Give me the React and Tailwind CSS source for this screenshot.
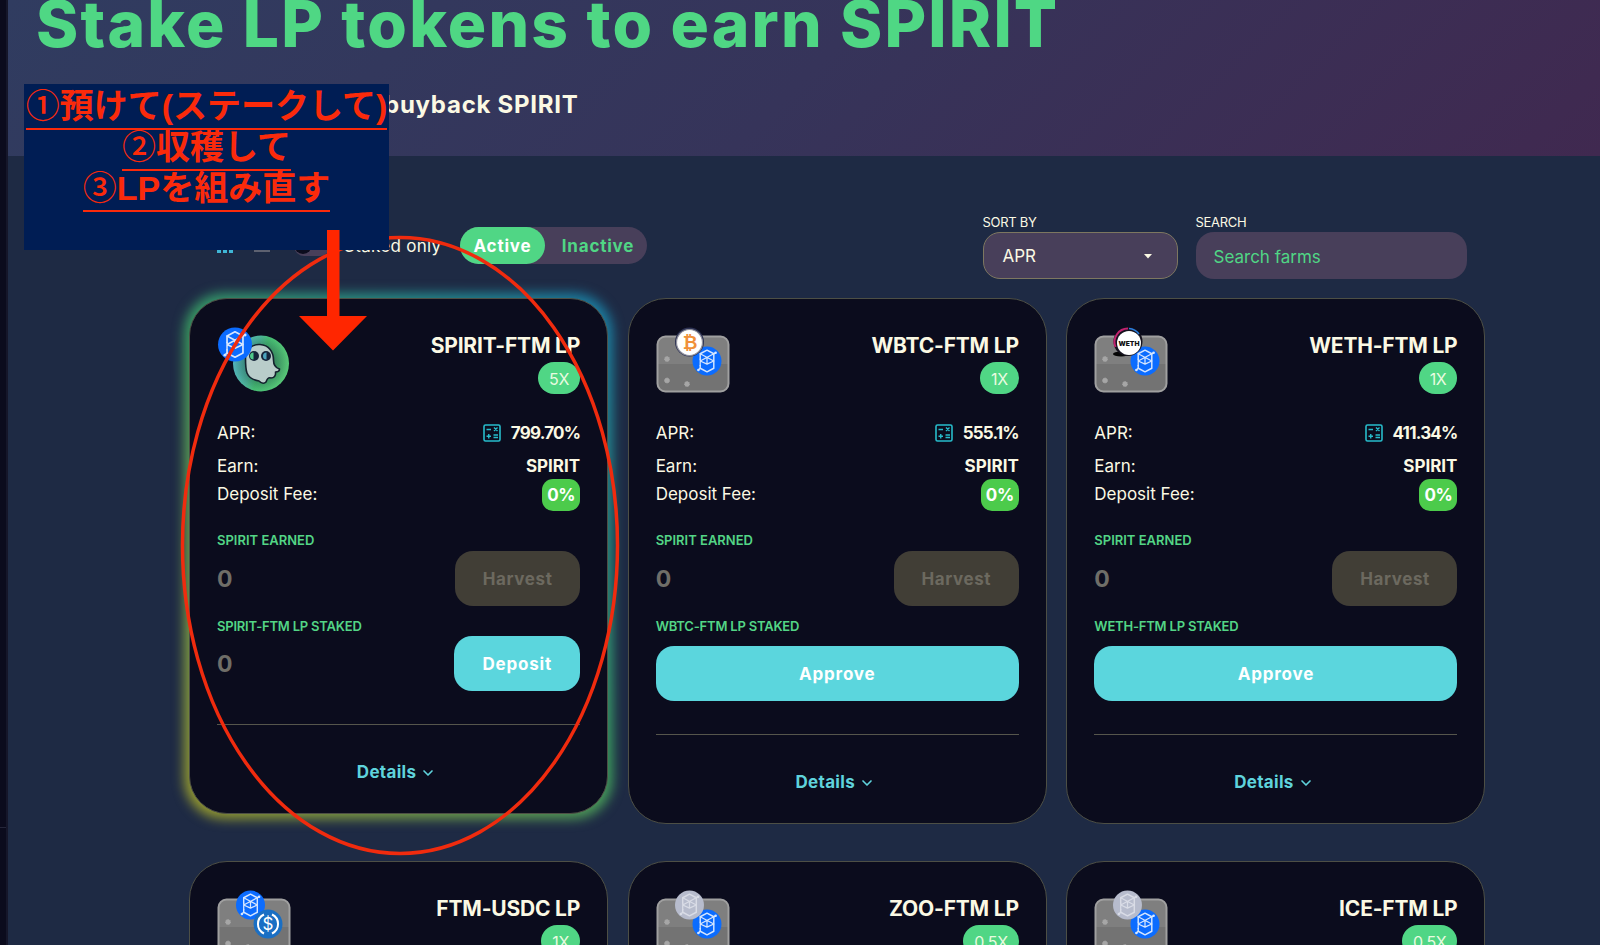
import React, { useState } from 'react';
import { ChevronDown } from 'lucide-react';

const farms = [
  { name: 'SPIRIT-FTM LP', multiplier: '5X', apr: '799.70%', logo: 'spirit', approved: true, featured: true },
  { name: 'WBTC-FTM LP', multiplier: '1X', apr: '555.1%', logo: 'wbtc' },
  { name: 'WETH-FTM LP', multiplier: '1X', apr: '411.34%', logo: 'weth' },
  { name: 'FTM-USDC LP', multiplier: '1X', logo: 'usdc', collapsed: true },
  { name: 'ZOO-FTM LP', multiplier: '0.5X', logo: 'zoo', collapsed: true },
  { name: 'ICE-FTM LP', multiplier: '0.5X', logo: 'ice', collapsed: true },
];

function Coin({ x, y, r, fill = '#0b6cff', stroke = '#d5e6ff' }) {
  return (
    <g transform={`translate(${x} ${y}) scale(${r / 16})`}>
      <circle r="16" fill={fill} />
      <g fill="none" stroke={stroke} strokeWidth="1.6" strokeLinejoin="round" strokeLinecap="round">
        <path d="M-7.5 -2 V-8 L0 -12 L7.5 -8 V8 L0 12 L-7.5 8 V5" />
        <path d="M-7.5 -8 L7.5 0 M7.5 -8 L-7.5 0 M-7.5 0 L0 3.500 L7.5 0 M0 -4 V3 M-7.5 -2 V5" strokeWidth="1.400" />
        <path d="M7.5 -8 L9.5 -9 M-7.5 8 L-9.5 10" />
      </g>
      <circle cx="9.500" cy="-9" r="1.400" fill={stroke} />
      <circle cx="-9.500" cy="10" r="1.400" fill={stroke} />
    </g>
  );
}

function Plate() {
  return (
    <g>
      <rect x="1.500" y="9.500" width="71" height="55" rx="8" fill="#737373" />
      <path d="M1.500 37 V17.500 a8 8 0 0 1 8 -8 H64.500 a8 8 0 0 1 8 8 V37 Z" fill="#7f7f7f" />
      <rect x="1.500" y="9.500" width="71" height="55" rx="8" fill="none" stroke="#a0a0a0" strokeWidth="2" />
      {[[11, 32], [11, 53.5], [31, 57]].map(([cx, cy]) => (
        <circle key={`${cx}-${cy}`} cx={cx} cy={cy} r="2.500" fill="#a6a6a6" stroke="#a6a6a6" strokeWidth="1" strokeDasharray="1.200 1" />
      ))}
    </g>
  );
}

function SpiritLogo() {
  return (
    <g>
      <defs>
        <linearGradient id="ghostRing" x1="0" y1="0" x2="1" y2="0.300">
          <stop offset="0" stopColor="#55b5d0" />
          <stop offset="0.450" stopColor="#4fb79c" />
          <stop offset="0.600" stopColor="#47c074" />
          <stop offset="1" stopColor="#58c978" />
        </linearGradient>
        <radialGradient id="ghostShade">
          <stop offset="0.500" stopColor="#1d4a44" stopOpacity="0.500" />
          <stop offset="1" stopColor="#1d4a44" stopOpacity="0" />
        </radialGradient>
      </defs>
      <circle cx="44" cy="36.500" r="28" fill="url(#ghostRing)" />
      <circle cx="44" cy="36.500" r="28" fill="url(#ghostShade)" />
      <path
        d="M28.500 31 C29 22 35 17 43 17.500 C52 18 56.500 25 56.500 33 C56.500 38 59 41 62.500 42 C62.500 44 60.500 45 58.500 45 C59 49 57 51 54 51 C51 50 50 52 49 55 C47 57 44 56 42 54 C36 53 32 51 30 46 C28.500 42 28.500 37 28.500 31 Z"
        fill="#b9cdca"
        stroke="#14222e"
        strokeWidth="1.600"
        strokeLinejoin="round"
      />
      <circle cx="37" cy="29" r="5" fill="#15243a" />
      <circle cx="49" cy="29" r="5" fill="#15243a" />
      <path d="M36.500 25.500 a3.500 3.500 0 0 0 0 7 Z" fill="#4fc98a" />
      <path d="M49.500 25.500 a3.500 3.500 0 0 0 0 7 Z" fill="#4aa3bd" />
      <Coin x={18} y={17.5} r={17} />
    </g>
  );
}

function TopToken({ logo }) {
  if (logo === 'wbtc') {
    return (
      <g>
        <circle cx="33.500" cy="15" r="14.500" fill="#2c3153" />
        <circle cx="33.500" cy="15.500" r="13" fill="#ffffff" stroke="#8f909c" strokeWidth="1.200" />
        <text x="34" y="22" textAnchor="middle" className="text-[18px] font-bold [font-family:'DejaVu_Sans',sans-serif]" fill="#f0903a">₿</text>
      </g>
    );
  }
  if (logo === 'weth') {
    return (
      <g>
        <ellipse cx="27" cy="27" rx="8" ry="2.500" fill="#050505" />
        <circle cx="34" cy="14.500" r="14.500" fill="#15121e" />
        <path d="M21.500 20 A13.500 13.500 0 0 1 34 1.500" fill="none" stroke="#c2226f" strokeWidth="2" />
        <path d="M35 1.500 A13.500 13.500 0 0 1 45 7" fill="none" stroke="#2a7fe0" strokeWidth="1.600" />
        <circle cx="35" cy="16" r="12" fill="#ffffff" />
        <text x="35" y="18.600" textAnchor="middle" textLength="21" lengthAdjust="spacingAndGlyphs" className="text-[6.5px] font-black" fill="#111111">WETH</text>
      </g>
    );
  }
  if (logo === 'usdc') return <Coin x={33.5} y={15} r={14.5} />;
  return <Coin x={33.5} y={15} r={14.5} fill="#b7bccd" stroke="#d9dce6" />;
}

function UsdcCoin() {
  return (
    <g>
      <circle cx="51" cy="34" r="14.500" fill="#1a6fc4" />
      <path d="M47 24.500 A10.500 10.500 0 0 0 47 43.500 M55 24.500 A10.500 10.500 0 0 1 55 43.500" fill="none" stroke="#ffffff" strokeWidth="2" />
      <text x="51" y="40" textAnchor="middle" className="text-[17px]" fill="#ffffff">$</text>
    </g>
  );
}

// the plain FTM coin sits under the paired token in every pool except USDC
function FarmLogo({ logo }) {
  return (
    <svg className="h-[66px] w-[76px] shrink-0" viewBox="0 0 76 66">
      {logo === 'spirit' ? (
        <SpiritLogo />
      ) : (
        <>
          <Plate />
          {logo === 'usdc' && <TopToken logo={logo} />}
          {logo === 'usdc' ? <UsdcCoin /> : <Coin x={51} y={34} r={14.5} />}
          {logo !== 'usdc' && <TopToken logo={logo} />}
        </>
      )}
    </svg>
  );
}

function CalculateIcon() {
  return (
    <svg className="-mt-0.5 h-[18px] w-[18px]" viewBox="0 0 18 18" fill="none" stroke="#27bccb" strokeWidth="1.600">
      <rect x="1" y="1" width="16" height="16" rx="1.500" />
      <path d="M3.500 5.500 H8 M11 3.500 L14.500 7 M14.500 3.500 L11 7 M3.500 12.200 H8 M5.750 10 V14.500 M10.500 11 H15 M10.500 13.500 H15" strokeWidth="1.400" />
    </svg>
  );
}

function FarmCard({ farm }) {
  return (
    <div className="relative">
      {farm.featured && (
        <div className="absolute -inset-[5px] rounded-[40px] bg-linear-45 from-[#98982a] via-[#3a9a5c] to-[#1a7aa4] blur-[6px]" />
      )}
      <div className="relative flex flex-col rounded-[38px] border border-[#4d4f45] bg-[#0b0c1d] px-[27px] pt-7 text-[#fbf9e4]">
        <div className="flex justify-between">
          <FarmLogo logo={farm.logo} />
          <div className="flex flex-col items-end">
            <h2 className="h-[35px] text-[21px] leading-[38px] font-bold tracking-[-0.2px] whitespace-nowrap">{farm.name}</h2>
            <span className="flex h-8 items-center rounded-full bg-[#50d685] px-[11px] pt-px text-base tracking-[-0.3px] text-[#e9fbe0]">{farm.multiplier}</span>
          </div>
        </div>
        {farm.collapsed ? <div className="h-40" /> : <FarmDetails farm={farm} />}
      </div>
    </div>
  );
}

function FarmDetails({ farm }) {
  return (
    <>
      <div className="mt-[27px] flex h-[26px] items-center justify-between">
        <span className="text-[17px]">APR:</span>
        <span className="flex items-center gap-[10px] text-[17px] font-bold tracking-[-0.8px]"><CalculateIcon />{farm.apr}</span>
      </div>
      <div className="mt-[7px] flex h-[26px] items-center justify-between text-[17px]">
        <span>Earn:</span>
        <span className="font-bold">SPIRIT</span>
      </div>
      <div className="-mt-px flex h-8 items-start justify-between text-[17px]">
        <span className="leading-[30px]">Deposit Fee:</span>
        <span className="flex h-8 w-[38px] items-center justify-center rounded-[11px] bg-[#4ccb4b] pt-0.5 font-bold tracking-[-0.4px] text-white">0%</span>
      </div>
      <div className="mt-[19px] h-[21px] text-[13px] leading-[21px] font-semibold text-[#53d586]">SPIRIT EARNED</div>
      <div className="flex items-center justify-between">
        <span className="pt-0.5 text-[23px] font-bold text-[#6f6e68]">0</span>
        <button disabled className="h-[55px] w-[125px] rounded-[18px] bg-[#413e36] pt-0.5 text-[17px] font-bold tracking-[0.6px] text-[#6c695f]">Harvest</button>
      </div>
      <div className="mt-[10px] h-5 text-[13px] leading-5 font-semibold tracking-[-0.2px] whitespace-nowrap text-[#53d586]">{farm.name} STAKED</div>
      {farm.approved ? (
        <div className="flex items-center justify-between">
          <span className="pt-0.5 text-[23px] font-bold text-[#6f6e68]">0</span>
          <button className="h-[55px] w-[126px] rounded-[18px] bg-[#5bd6dd] pt-0.5 text-[17px] font-bold tracking-[0.8px] text-white">Deposit</button>
        </div>
      ) : (
        <button className="mt-[10px] h-[55px] rounded-[18px] bg-[#5bd6dd] pt-0.5 text-[17px] font-bold tracking-[0.8px] text-white">Approve</button>
      )}
      <div className="mt-[33px] h-px bg-[#56564c]" />
      <button className="mb-[-8px] flex h-24 items-center justify-center gap-1 pr-1 text-[17px] font-bold tracking-[0.3px] text-[#5fd3dc]">
        Details <ChevronDown className="h-4 w-4" strokeWidth={2.5} />
      </button>
    </>
  );
}

function Note() {
  return (
    <>
      <svg className="pointer-events-none absolute inset-0 h-[945px] w-[1600px]" viewBox="0 0 1600 945">
        <ellipse cx="400" cy="545.5" rx="217.500" ry="308" fill="none" stroke="#f02b0e" strokeWidth="3.500" />
      </svg>
      <div className="absolute top-[84px] left-6 flex h-[166px] w-[365px] flex-col items-center bg-[#001d54] pt-px text-[34px] leading-[42px] font-bold whitespace-nowrap text-[#fa2a0b] [font-family:'Liberation_Sans','Noto_Sans_CJK_JP',sans-serif]">
        <span className="-mb-1 h-[45px] border-b-2 border-[#fa2a0b]"><span className="font-medium">①</span>預けて(ステークして)</span>
        <span className="-mb-1 h-[45px] border-b-2 border-[#fa2a0b]"><span className="font-medium">②</span>収穫して</span>
        <span className="h-[45px] border-b-2 border-[#fa2a0b]"><span className="font-medium">③</span>LPを組み直す</span>
      </div>
      <svg className="absolute top-[230px] left-[299px] h-[121px] w-[68px]" viewBox="0 0 68 121">
        <path d="M28 0 H40.500 V86 H68 L34 120.500 L0 86 H28 Z" fill="#ff2600" />
      </svg>
    </>
  );
}

export default function App() {
  const [search, setSearch] = useState('');

  return (
    <div className="relative flex h-[945px] w-[1600px] overflow-hidden bg-[#1e2a44] [font-family:Inter,'Noto_Sans',sans-serif]">
      <div className="flex w-2 shrink-0 flex-col border-r-2 border-[#15162a] bg-[#0b0b1d] pt-[827px]">
        <div className="h-px bg-[#25263a]" />
      </div>
      <main className="flex-1">
        <header className="h-[156px] bg-linear-[135deg] from-[#303c60] via-[#36345a] to-[#402950] pl-7">
          <h1 className="h-[72px] text-[64px] leading-[47px] font-extrabold tracking-[2.2px] whitespace-nowrap text-[#4fd784]">Stake LP tokens to earn SPIRIT</h1>
          <p className="pl-[348px] text-2xl leading-[66px] font-bold tracking-[0.75px] text-[#fbf9e4]">buyback SPIRIT</p>
        </header>

        <div className="ml-[181px] w-[1296.5px]">
          <div className="flex h-[142px] items-start pt-[57px] text-[#fbf9e4]">
            <div className="mt-[14px] flex h-[37px] items-center">
              <div className="ml-7 flex h-[14px] w-[17px] flex-wrap gap-[2px]">
                {[0, 1, 2, 3, 4, 5].map((i) => (
                  <span key={i} className="h-[6px] w-[4px] bg-[#3fb6d6]" />
                ))}
              </div>
              <div className="ml-5 flex w-4 flex-col gap-[2px]">
                <span className="h-[3px] bg-[#5d6170]" />
                <span className="h-[3px] bg-[#5d6170]" />
                <span className="h-[3px] bg-[#5d6170]" />
              </div>
              <div className="ml-6 h-5 w-9 rounded-full bg-[#483f5a]">
                <div className="h-[18px] w-[18px] rounded-full bg-[#0b0c1d]" />
              </div>
              <span className="ml-[14px] w-[116px] pt-0.5 text-[17px] tracking-[0.3px] whitespace-nowrap">Staked only</span>
              <div className="flex h-[37px] w-[187px] items-center rounded-full bg-[#483f5a] text-[17px] font-bold">
                <button className="h-[37px] w-[85px] rounded-full bg-[#50d685] pt-0.5 tracking-[0.8px] text-white">Active</button>
                <button className="flex-1 pt-0.5 pl-1 tracking-[0.8px] text-[#50d685]">Inactive</button>
              </div>
            </div>
            <div className="mr-[19px] ml-auto flex gap-[18px]">
              <label className="flex flex-col text-[13px] leading-[19px]">
                <span className="tracking-[-0.3px]">SORT BY</span>
                <span className="flex h-[47px] w-[195px] items-center justify-between rounded-[17px] border border-[#7d7760] bg-[#483f5a] px-[19px] pt-0.5 text-[17px]">
                  APR
                  <svg className="mr-[5px] mb-0.5 h-2 w-[10px]" viewBox="0 0 10 8"><path d="M1 2 H9 L5 6.500 Z" fill="#fbf9e4" /></svg>
                </span>
              </label>
              <label className="flex flex-col text-[13px] leading-[19px]">
                <span className="tracking-[-0.3px]">SEARCH</span>
                <input
                  value={search}
                  onChange={(e) => setSearch(e.target.value)}
                  placeholder="Search farms"
                  className="h-[47px] w-[271px] rounded-[18px] bg-[#483f5a] px-[18px] pt-0.5 text-[17px] placeholder:text-[#50d685]"
                />
              </label>
            </div>
          </div>

          <div className="grid grid-cols-3 items-start gap-x-[19.5px] gap-y-[37px]">
            {farms.map((farm) => (
              <FarmCard key={farm.name} farm={farm} />
            ))}
          </div>
        </div>
      </main>
      <Note />
    </div>
  );
}
